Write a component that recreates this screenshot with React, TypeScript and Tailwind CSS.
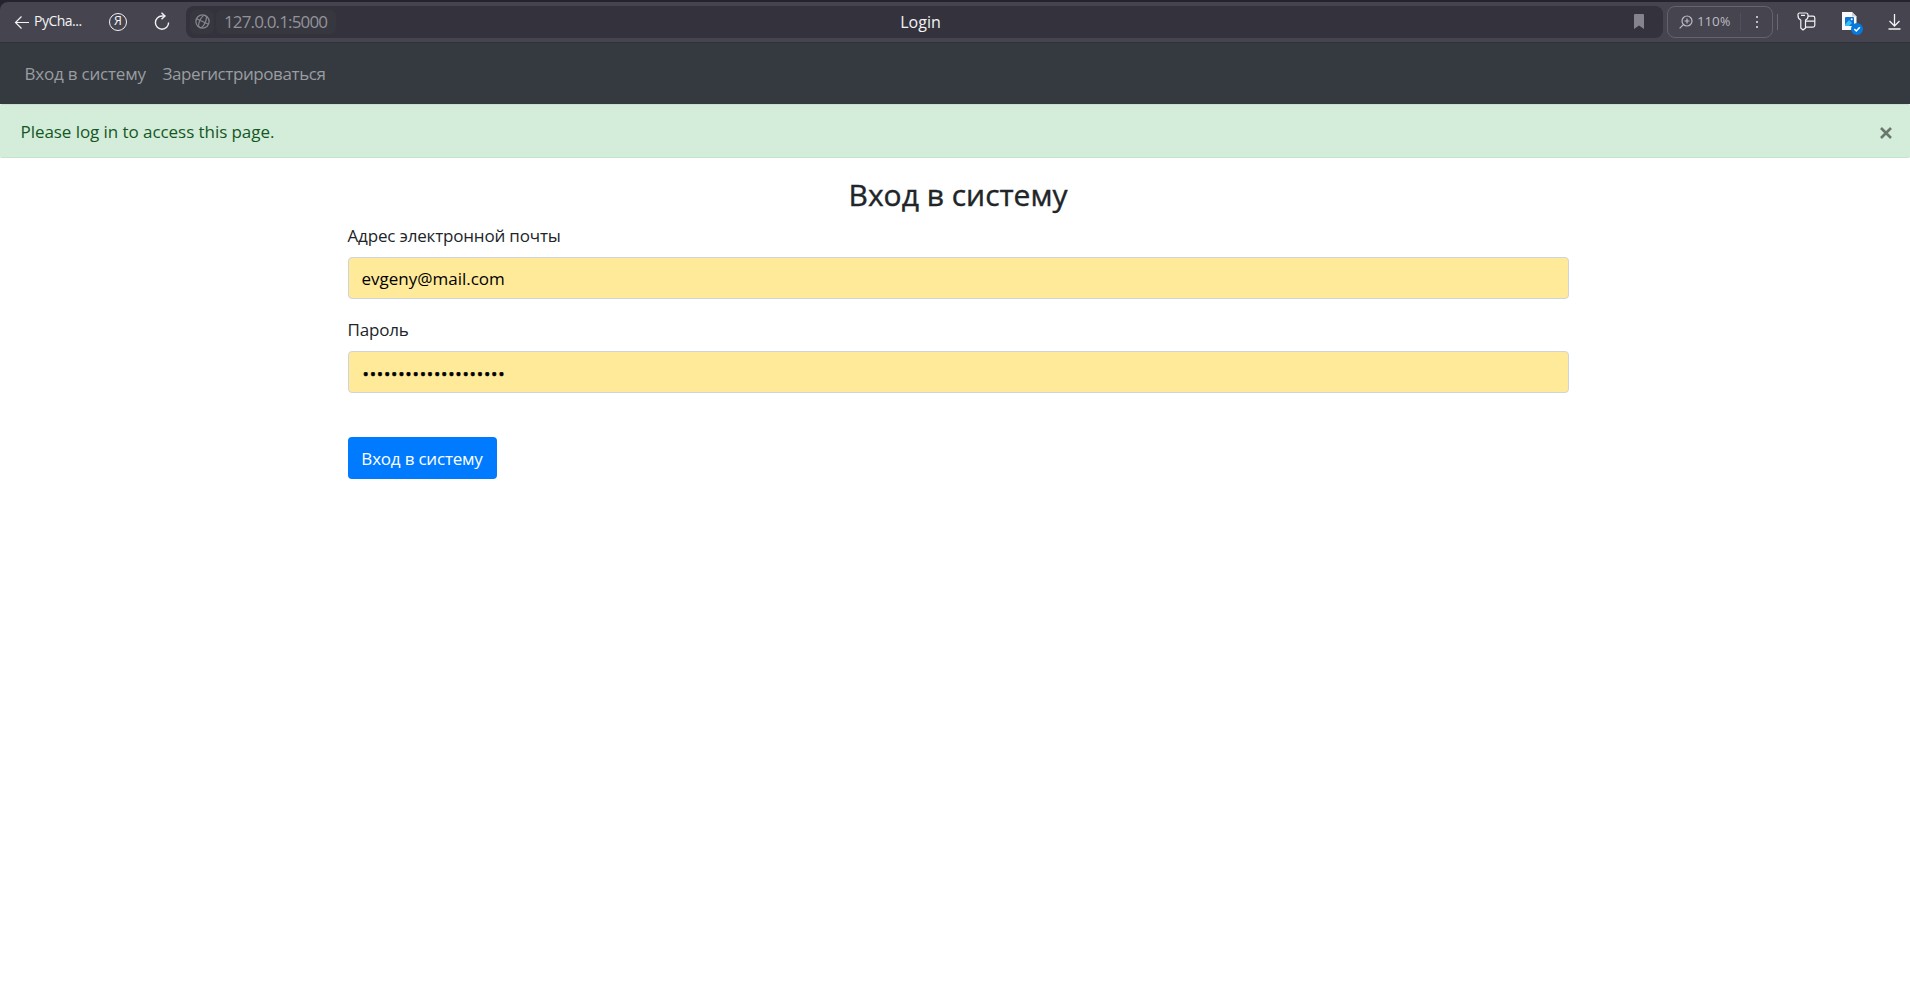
import type { ReactNode } from "react";

function BackIcon() {
  return (
    <svg className="h-4 w-4 shrink-0" viewBox="0 0 16 16" fill="none" stroke="#f3f3f5" strokeWidth="1.2">
      <path d="M1.5 8.5H15M7.5 2.5l-6 6 6 6" />
    </svg>
  );
}

function ReloadIcon() {
  return (
    <svg className="h-[18px] w-4 shrink-0" viewBox="0 0 16 18" fill="none" stroke="#f3f3f5" strokeWidth="1.4">
      <path d="M11 4H8a6.600 6.600 0 1 0 6.600 6.600" />
      <path d="M7.500.7 11 4 7.500 7.300" />
    </svg>
  );
}

function YandexIcon() {
  return (
    <span className="flex h-[18px] w-[18px] shrink-0 items-center justify-center rounded-full border-[1.5px] border-[#f3f3f5] font-['Open_Sans',sans-serif] text-[12.5px] leading-none text-[#f3f3f5]">
      Я
    </span>
  );
}

function SiteIcon() {
  return (
    <svg className="h-[15px] w-[15px]" viewBox="0 0 15 15" fill="none" stroke="#85848d" strokeWidth="1.3">
      <circle cx="7.500" cy="7.500" r="6.600" />
      <g transform="rotate(25 7.500 7.500)">
        <ellipse cx="7.500" cy="7.500" rx="2.800" ry="6.600" />
        <path d="M1 7.500h13" />
      </g>
    </svg>
  );
}

function ZoomIcon() {
  return (
    <svg className="h-[14px] w-[14px] shrink-0" viewBox="0 0 14 14" fill="none" stroke="#bdbcc3" strokeWidth="1.2">
      <circle cx="8" cy="6" r="5" />
      <path d="M4.400 9.600.6 13.400M8 3.500v5M5.500 6h5" />
    </svg>
  );
}

function PasswordsIcon() {
  return (
    <svg className="h-[19px] w-[19px] shrink-0" viewBox="0 0 19 19" fill="none" stroke="#f3f3f5" strokeWidth="1.2" strokeLinejoin="round">
      <path d="M2.500 1h6.500q2 0 2 2v1.500Q11 7 8.500 8v8L6 18 3.800 16V8Q1 7 1 3.500V2.500Q1 1 2.500 1ZM4 3.300h4" />
      <path d="M11 4.200h5q1.800 0 1.800 1.800v7.300q0 1.800-1.800 1.800H8.800M9 9.200h8.800" />
    </svg>
  );
}

function ImageFileIcon() {
  return (
    <svg className="h-[24px] w-[22px] shrink-0" viewBox="0 0 22 24">
      <path d="M0 0h10l4.500 4.500V18H0Z" fill="#fafafa" />
      <path d="M10 0v4.500h4.500Z" fill="#d0d0d3" />
      <rect x="3" y="5" width="9" height="9" rx="1" fill="#1173d4" />
      <path d="m3 12.500 4-4.500 3 3-3 3H3Z" fill="#35c0f4" />
      <circle cx="9.700" cy="7.300" r="1" fill="#fff" />
      <circle cx="15" cy="17" r="6" fill="#0579dc" />
      <path d="m12.300 17 2 2 3.500-3.700" fill="none" stroke="#fff" strokeWidth="1.500" />
    </svg>
  );
}

function DownloadIcon() {
  return (
    <svg className="h-4 w-[13px] shrink-0" viewBox="0 0 13 16" fill="none" stroke="#f3f3f5" strokeWidth="1.3">
      <path d="M6.500 0v12M1.500 7l5 5 5-5M.5 15h12" />
    </svg>
  );
}

function BrowserBar() {
  return (
    <div className="bg-[#25242e] pt-0.5">
      <div className="flex h-[41px] items-center rounded-tl-lg border-b border-[#33323c] bg-[#45444f] pb-px pl-3.5 text-[#f3f3f5]">
        <div className="flex w-[95px] items-center gap-1">
          <BackIcon />
          <span className="-translate-y-px text-[14px] leading-5 tracking-[-0.5px]">PyCha...</span>
        </div>
        <div className="flex w-[45px] items-center">
          <YandexIcon />
        </div>
        <div className="-mt-0.5 flex w-8 items-center">
          <ReloadIcon />
        </div>
        <div className="grid h-8 w-[1477px] grid-cols-3 items-center rounded-lg bg-[#33323d]">
          <div className="flex items-center gap-0.5 pl-1">
            <div className="flex h-6 w-6 items-center justify-center rounded-md bg-[#36373f]">
              <SiteIcon />
            </div>
            <div className="flex h-6 w-[120px] items-center rounded-md bg-[#36373f] pl-2 text-[17px] tracking-[-0.85px] text-[#94939b]">
              127.0.0.1:5000
            </div>
          </div>
          <div className="-translate-x-1 text-center text-base leading-6">Login</div>
          <div className="flex justify-end pr-[19px]">
            <svg className="h-[15px] w-[10px]" viewBox="0 0 10 15">
              <path d="M0 1q0-1 1-1h8q1 0 1 1v14l-5-3.500L0 15Z" fill="#85848d" />
            </svg>
          </div>
        </div>
        <div className="ml-1 flex h-8 w-[106px] items-center rounded-lg border border-[#65646e] pl-[11px] text-[13.5px] text-[#bdbcc3]">
          <ZoomIcon />
          <span className="ml-1 w-[23px] tracking-[-0.2px]">110</span>
          <span className="w-5 text-[12.5px] leading-5">%</span>
          <span className="h-[18px] w-px bg-[#52515b]" />
          <span className="ml-[15px] flex flex-col gap-[3px]">
            <i className="h-0.5 w-0.5 bg-[#bdbcc3]" />
            <i className="h-0.5 w-0.5 bg-[#bdbcc3]" />
            <i className="h-0.5 w-0.5 bg-[#bdbcc3]" />
          </span>
        </div>
        <span className="ml-1 h-4 w-px bg-[#6b6a74]" />
        <div className="ml-[19px] flex w-[45px]">
          <PasswordsIcon />
        </div>
        <div className="mt-[5px] flex w-[46px]">
          <ImageFileIcon />
        </div>
        <DownloadIcon />
      </div>
    </div>
  );
}

function Field({ label, children }: { label: string; children: ReactNode }) {
  return (
    <div className="mb-[17px]">
      <div className="mb-2 h-[27px] pt-px text-[17px] leading-[26px] tracking-[-0.18px]">{label}</div>
      <div className="flex h-[42px] items-center rounded-[4px] border border-[#ced4da] bg-[#ffea9a] px-[13px] pt-0.5 text-[17px] text-black">
        {children}
      </div>
    </div>
  );
}

export default function App() {
  return (
    <div className="min-h-screen bg-white font-['Open_Sans','Noto_Sans',sans-serif] text-[#212529]">
      <BrowserBar />
      <nav className="flex h-[61px] items-center gap-[16px] bg-[#353a41] pl-[24.5px] text-[17px] text-[#9a9da0]">
        <a className="w-[122px] whitespace-nowrap tracking-[-0.2px]">Вход в систему</a>
        <a className="whitespace-nowrap tracking-[-0.4px]">Зарегистрироваться</a>
      </nav>
      <div className="flex h-[54px] items-center justify-between rounded-[2px] border-y border-[#c3e6cb] bg-[#d4edda] pl-[20.5px] pr-[18px] text-[17px] text-[#155724]">
        <span className="pt-0.5 tracking-[-0.06px]">Please log in to access this page.</span>
        <svg className="mt-[3px] h-3 w-3" viewBox="0 0 12 12" fill="none" stroke="#6a776d" strokeWidth="2.6">
          <path d="m1 1 10 10M11 1 1 11" />
        </svg>
      </div>
      <main className="mx-auto w-[1221px] translate-x-[3px] pt-[18px]">
        <h1 className="mb-[9px] text-center text-[30px] leading-[37px] font-medium [-webkit-text-stroke:0.4px_#212529]">
          Вход в систему
        </h1>
        <Field label="Адрес электронной почты">evgeny@mail.com</Field>
        <Field label="Пароль">
          <span className="pt-0.5 pl-px tracking-[0.75px] [-webkit-text-stroke:0.5px_#000]">••••••••••••••••••••</span>
        </Field>
        <button className="mt-[27px] h-[42px] w-[149px] rounded-[4px] bg-[#007bff] pt-0.5 text-[17px] tracking-[-0.2px] text-white">
          Вход в систему
        </button>
      </main>
    </div>
  );
}
